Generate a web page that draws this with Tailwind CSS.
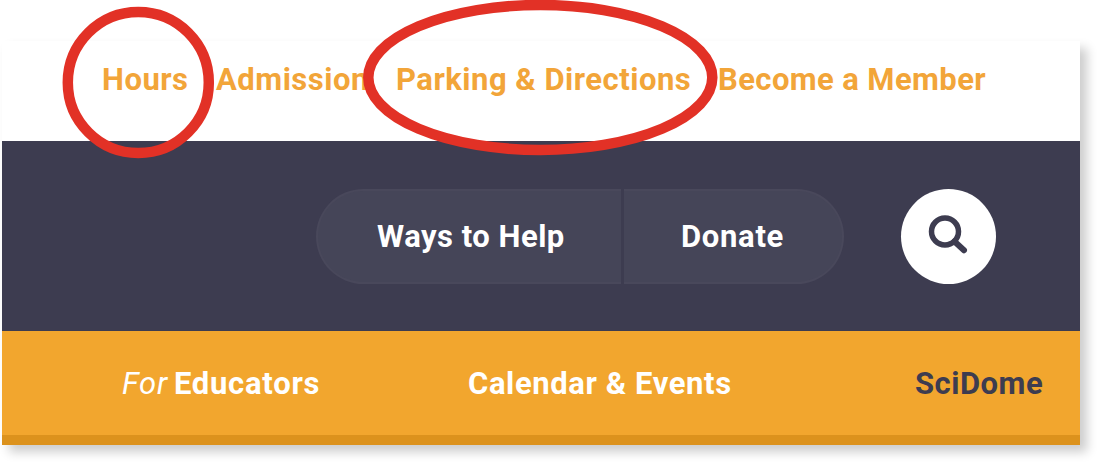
<!DOCTYPE html>
<html lang="en">
<head>
<meta charset="utf-8">
<title>Museum header</title>
<script src="https://cdn.jsdelivr.net/npm/@tailwindcss/browser@4"></script>
</head>
<body class="relative h-[465px] overflow-hidden bg-white font-['Roboto',sans-serif] text-[31px] font-bold leading-[36px] whitespace-nowrap">
<div class="pt-[41px] pl-[2px]">
  <div class="w-[1078px] bg-white shadow-[7px_7px_10px_rgba(0,0,0,0.2)]">
    <nav class="flex h-[100px] pt-[21px] pl-[100px] tracking-[0.5px] text-[#f2a539]">
      <a class="w-[114px]">Hours</a>
      <a class="w-[180px]">Admission</a>
      <a class="w-[322px]">Parking &amp; Directions</a>
      <a class="tracking-[0.4px]">Become a Member</a>
    </nav>
    <div class="flex h-[190px] items-center bg-[#3d3c50] pl-[314px] text-white">
      <a class="flex h-[95px] w-[305px] items-center rounded-l-full border-2 border-r-0 border-[#49485b] bg-[#454558] pt-[2px] pl-[59px] tracking-[0.5px]">Ways to Help</a>
      <a class="ml-[3px] flex h-[95px] w-[220px] items-center rounded-r-full border-2 border-l-0 border-[#49485b] bg-[#454558] pt-[2px] pl-[57px] tracking-[0.7px]">Donate</a>
      <button class="ml-[57px] size-[95px] rounded-full bg-white">
        <svg class="size-[95px]" viewBox="0 0 95 95" fill="none" stroke="#3d3c50"><circle cx="44" cy="42.5" r="13.5" stroke-width="5.5"/><path d="M53.5 52.5L63 61.2" stroke-width="6" stroke-linecap="round"/></svg>
      </button>
    </div>
    <nav class="flex h-[114px] border-b-[10px] border-[#dc921d] bg-[#f2a62e] pt-[35px] pl-[120px] text-white">
      <a class="w-[346px] tracking-[0.75px]"><span class="font-normal italic">For</span><span class="ml-[6px]">Educators</span></a>
      <a class="w-[447px] tracking-[0.6px]">Calendar &amp; Events</a>
      <a class="tracking-[0.5px] text-[#3d3c50]">SciDome</a>
    </nav>
  </div>
</div>
<svg class="absolute top-0 left-0 h-[170px] w-[1100px]" fill="none" stroke="#e23126" stroke-width="10.5"><ellipse cx="138.3" cy="82.5" rx="70.5" ry="70.5"/><ellipse cx="540.3" cy="77.5" rx="172" ry="72.5"/></svg>
</body>
</html>
